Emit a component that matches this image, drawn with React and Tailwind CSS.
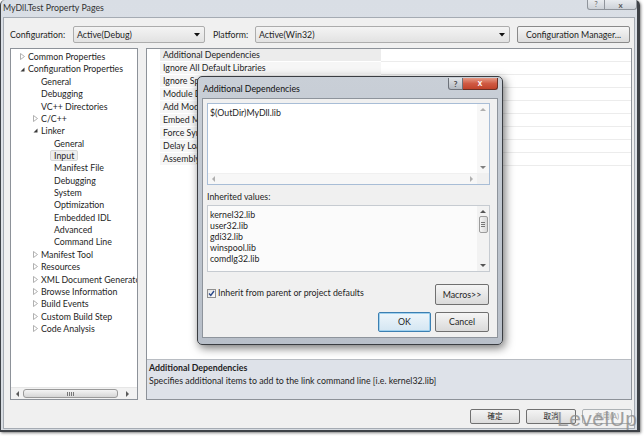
import React from "react";

const TriClosed = () => (
  <svg width="5" height="7" viewBox="0 0 5 7">
    <path d="M0.5 0.5 L4.5 3.5 L0.5 6.5 Z" fill="none" stroke="#a8a8a8" strokeWidth="0.9" />
  </svg>
);
const TriOpen = () => (
  <svg width="5" height="5" viewBox="0 0 5 5">
    <path d="M4.5 0.5 L4.5 4.5 L0.5 4.5 Z" fill="#3a3a3a" />
  </svg>
);
const Arrow = ({ dir, color = "#6e6e6e" }) => {
  const d = {
    up: "M0 4 L3 1 L6 4 Z",
    down: "M0 1 L3 4 L6 1 Z",
    left: "M4 0 L1 3 L4 6 Z",
    right: "M1 0 L4 3 L1 6 Z",
  }[dir];
  const vert = dir === "up" || dir === "down";
  return (
    <svg width={vert ? 6 : 5} height={vert ? 5 : 6} viewBox={vert ? "0 0 6 5" : "0 0 5 6"}>
      <path d={d} fill={color} />
    </svg>
  );
};
const ComboArrow = () => (
  <svg width="6" height="4" viewBox="0 0 6 4">
    <path d="M0 0 L6 0 L3 3.5 Z" fill="#111" />
  </svg>
);

const tree = [
  ["Common Properties", 0, "c"],
  ["Configuration Properties", 0, "o"],
  ["General", 1, null],
  ["Debugging", 1, null],
  ["VC++ Directories", 1, null],
  ["C/C++", 1, "c"],
  ["Linker", 1, "o"],
  ["General", 2, null],
  ["Input", 2, null, true],
  ["Manifest File", 2, null],
  ["Debugging", 2, null],
  ["System", 2, null],
  ["Optimization", 2, null],
  ["Embedded IDL", 2, null],
  ["Advanced", 2, null],
  ["Command Line", 2, null],
  ["Manifest Tool", 1, "c"],
  ["Resources", 1, "c"],
  ["XML Document Generator", 1, "c"],
  ["Browse Information", 1, "c"],
  ["Build Events", 1, "c"],
  ["Custom Build Step", 1, "c"],
  ["Code Analysis", 1, "c"],
];
const levelPad = ["pl-[9px]", "pl-[22px]", "pl-[35px]"];

const gridRows = [
  "Additional Dependencies",
  "Ignore All Default Libraries",
  "Ignore Specific Default Libraries",
  "Module Definition File",
  "Add Module to Assembly",
  "Embed Managed Resource File",
  "Force Symbol References",
  "Delay Loaded Dlls",
  "Assembly Link Resource",
];

const inherited = ["kernel32.lib", "user32.lib", "gdi32.lib", "winspool.lib", "comdlg32.lib"];

export default function App() {
  return (
    <div className="relative w-[644px] h-[436px] overflow-hidden bg-white font-['Lato','Noto_Sans_CJK_TC',sans-serif] text-[8.8px] text-[#1e1e1e]">
      {/* main window */}
      <div className="w-[640px] h-[432px] flex flex-col rounded-t-[5px] border-l border-r-[3px] border-b-[2px] border-[#3e4247] bg-gradient-to-b from-[#d9dee5] via-[#dfe3e8] to-[#d7dce2] shadow-[1px_1px_3px_rgba(0,0,0,0.5)]">
        {/* title bar */}
        <div className="h-[17px] flex justify-between items-start">
          <div className="pl-[2px] pt-[2px] text-[8.8px] leading-[12px] text-[#333]">MyDll.Test Property Pages</div>
          <div className="flex">
            <div className="w-[18px] h-[10px] border border-[#8f949b] border-t-0 rounded-bl-[3px] bg-gradient-to-b from-[#e8ebef] to-[#cdd2d8] flex items-center justify-center text-[7px] leading-none text-[#666]">?</div>
            <div className="w-[32px] h-[10px] border border-l-0 border-t-0 border-[#8f949b] rounded-br-[3px] bg-gradient-to-b from-[#e8ebef] to-[#cdd2d8] flex items-center justify-center text-[8px] leading-none text-[#555] font-bold">x</div>
          </div>
        </div>
        {/* client */}
        <div className="flex-1 mx-[2px] mb-[1px] bg-[#f0f0f0] border border-[#a5abb3] flex flex-col">
          {/* config row */}
          <div className="mt-[8px] h-[17px] flex items-center pl-[6px]">
            <span className="w-[63px]">Configuration:</span>
            <div className="w-[132px] h-[17px] border border-[#acacac] rounded-[2px] bg-gradient-to-b from-[#f4f4f4] to-[#e2e2e2] flex items-center justify-between pl-[3px] pr-[4px]">
              <span>Active(Debug)</span>
              <ComboArrow />
            </div>
            <span className="ml-[8px] w-[42px]">Platform:</span>
            <div className="w-[255px] h-[17px] border border-[#acacac] rounded-[2px] bg-gradient-to-b from-[#f4f4f4] to-[#e2e2e2] flex items-center justify-between pl-[3px] pr-[4px]">
              <span>Active(Win32)</span>
              <ComboArrow />
            </div>
            <div className="ml-[7px] w-[113px] h-[17px] border border-[#8a8a8a] rounded-[2px] bg-gradient-to-b from-[#f6f6f6] to-[#dcdcdc] flex items-center justify-center">
              Configuration Manager...
            </div>
          </div>
          {/* panels */}
          <div className="mt-[5px] h-[352px] flex pl-[6px]">
            {/* tree */}
            <div className="w-[128px] h-full border border-[#8d9299] bg-white flex flex-col">
              <div className="flex-1 pt-[1.5px] overflow-hidden">
                {tree.map(([label, lvl, tri, sel], i) => (
                  <div key={i} className={`h-[12.36px] flex items-center whitespace-nowrap ${levelPad[lvl]}`}>
                    <span className="w-[8px] shrink-0 flex items-center">
                      {tri === "c" ? <TriClosed /> : tri === "o" ? <TriOpen /> : null}
                    </span>
                    {sel ? (
                      <span className="-ml-[4px] px-[3px] h-[11px] flex items-center bg-[#eeeeee] border border-[#d8d8d8] rounded-[2px]">{label}</span>
                    ) : (
                      <span>{label}</span>
                    )}
                  </div>
                ))}
              </div>
              <div className="h-[12px] flex items-center bg-[#f2f2f2] border-t border-[#e6e6e6]">
                <span className="w-[12px] flex justify-center"><Arrow dir="left" color="#5a5a5a" /></span>
                <div className="w-[95px] h-[9px] rounded-[3px] border border-[#9a9a9a] bg-gradient-to-b from-[#f4f4f4] to-[#d6d6d6] flex items-center justify-center gap-[1px]">
                  <span className="w-[1px] h-[4px] bg-[#777]" />
                  <span className="w-[1px] h-[4px] bg-[#777]" />
                  <span className="w-[1px] h-[4px] bg-[#777]" />
                  <span className="w-[1px] h-[4px] bg-[#777]" />
                </div>
                <span className="flex-1 flex justify-center"><Arrow dir="right" color="#5a5a5a" /></span>
              </div>
            </div>
            {/* property grid */}
            <div className="ml-[8px] w-[486px] h-full border border-[#8d9299] bg-white flex flex-col">
              <div className="h-[310px]">
                {gridRows.map((r, i) => (
                  <div key={i} className="h-[13px] flex">
                    <div className="w-[13px]" />
                    <div className={`w-[221px] flex items-center pl-[3px] border-b border-white whitespace-nowrap overflow-hidden ${i === 0 ? "bg-[#ececec]" : "bg-[#f6f6f6]"}`}>{r}</div>
                    <div className="flex-1 border-b border-[#ececec]" />
                  </div>
                ))}
              </div>
              <div className="flex-1 border-t border-[#b8bcc2] bg-[#dee2e9] pl-[2px] pt-[1px]">
                <div className="font-bold leading-[13px]">Additional Dependencies</div>
                <div className="leading-[13px]">Specifies additional items to add to the link command line [i.e. kernel32.lib]</div>
              </div>
            </div>
          </div>
          {/* bottom buttons */}
          <div className="mt-[9px] h-[15px] flex justify-end gap-[6px] pr-[2px]">
            <div className="w-[50px] h-[15px] border border-[#707070] rounded-[2px] bg-gradient-to-b from-[#f4f4f4] to-[#dcdcdc] flex items-center justify-center text-[7.5px]">確定</div>
            <div className="w-[50px] h-[15px] border border-[#707070] rounded-[2px] bg-gradient-to-b from-[#f4f4f4] to-[#dcdcdc] flex items-center justify-center text-[7.5px]">取消</div>
            <div className="w-[50px] h-[15px] border border-[#adb2b5] rounded-[2px] bg-[#f4f4f4] flex items-center justify-center text-[7.5px] text-[#a0a0a0]">套用(A)</div>
          </div>
        </div>
      </div>

      {/* modal dialog */}
      <div className="absolute left-[197px] top-[76px] w-[306px] h-[269px] rounded-[5px] border border-[#3a3d42] bg-gradient-to-b from-[#c9cfd7] via-[#bfc6cf] to-[#b8bfc9] shadow-[2px_3px_10px_rgba(0,0,0,0.55)] flex flex-col">
        <div className="h-[21px] flex justify-between items-start">
          <div className="pl-[5px] pt-[6px] leading-[12px] text-[8.8px] text-[#111]">Additional Dependencies</div>
          <div className="flex mr-[4px] mt-[1px]">
            <div className="w-[15px] h-[12px] border border-[#6d727a] border-t-0 rounded-bl-[3px] bg-gradient-to-b from-[#e1e4e8] to-[#b3b9c1] flex items-center justify-center text-[8px] leading-none text-[#444] font-bold">?</div>
            <div className="w-[35px] h-[12px] border border-l-0 border-t-0 border-[#6b3025] rounded-br-[3px] bg-gradient-to-b from-[#e49a86] via-[#cf5a43] to-[#c0422a] flex items-center justify-center text-[8.5px] leading-none text-white font-bold">x</div>
          </div>
        </div>
        <div className="mx-[4px] h-[240px] bg-[#f0f0f0] border border-[#8e949c] p-[4px] flex flex-col">
          {/* text box */}
          <div className="w-[283px] h-[82px] border border-[#a8bdd6] bg-white flex flex-col">
            <div className="flex-1 flex">
              <div className="flex-1 pl-[2px] pt-[3px] leading-[12px]">$(OutDir)MyDll.lib</div>
              <div className="w-[12px] bg-[#f7f7f7] flex flex-col items-center justify-between py-[3px]">
                <Arrow dir="up" color="#b0b0b0" />
                <Arrow dir="down" color="#808080" />
              </div>
            </div>
            <div className="h-[11px] flex border-t border-[#f0f0f0]">
              <div className="flex-1 bg-[#f7f7f7] flex items-center justify-between px-[3px]">
                <Arrow dir="left" color="#b0b0b0" />
                <Arrow dir="right" color="#b0b0b0" />
              </div>
              <div className="w-[12px] bg-[#f0f0f0]" />
            </div>
          </div>
          <div className="pt-[6px] h-[20px] leading-[12px]">Inherited values:</div>
          {/* list */}
          <div className="w-[283px] h-[67px] border border-[#c6cbd1] bg-[#fbfbfb] flex">
            <div className="flex-1 pl-[2px] pt-[3px]">
              {inherited.map((t) => (
                <div key={t} className="h-[11px] leading-[11px]">{t}</div>
              ))}
            </div>
            <div className="w-[12px] bg-[#f2f2f2] flex flex-col items-center py-[3px]">
              <Arrow dir="up" color="#555" />
              <div className="mt-[2px] w-[9px] h-[17px] rounded-[2px] border border-[#9c9c9c] bg-gradient-to-r from-[#f4f4f4] to-[#d9d9d9] flex flex-col items-center justify-center gap-[1px]">
                <span className="w-[4px] h-[1px] bg-[#777]" />
                <span className="w-[4px] h-[1px] bg-[#777]" />
                <span className="w-[4px] h-[1px] bg-[#777]" />
              </div>
              <div className="flex-1" />
              <Arrow dir="down" color="#555" />
            </div>
          </div>
          {/* checkbox + macros */}
          <div className="mt-[12px] flex justify-between items-start">
            <div className="mt-[3px] flex items-center gap-[2px]">
              <div className="w-[9px] h-[9px] border border-[#8f8f8f] bg-gradient-to-br from-[#e4e4e4] to-[#fbfbfb] flex items-center justify-center">
                <svg width="7" height="7" viewBox="0 0 7 7">
                  <path d="M1 3.5 L2.8 5.5 L6 1" fill="none" stroke="#2c4a8a" strokeWidth="1.4" />
                </svg>
              </div>
              <span className="leading-[12px]">Inherit from parent or project defaults</span>
            </div>
            <div className="mr-[4px] w-[54px] h-[21px] border border-[#707070] rounded-[2px] bg-gradient-to-b from-[#f5f5f5] to-[#dadada] flex items-center justify-center">Macros&gt;&gt;</div>
          </div>
          <div className="mt-[7px] mr-[4px] flex justify-end gap-[4px]">
            <div className="w-[53px] h-[20px] border border-[#3c7fb1] rounded-[2px] bg-gradient-to-b from-[#eef6fb] to-[#d4e6f2] shadow-[inset_0_0_0_1px_#9fd1ef] flex items-center justify-center">OK</div>
            <div className="w-[54px] h-[20px] border border-[#707070] rounded-[2px] bg-gradient-to-b from-[#f5f5f5] to-[#dadada] flex items-center justify-center">Cancel</div>
          </div>
        </div>
      </div>

      {/* watermark */}
      <div className="absolute left-[557px] top-[407px] text-[21px] leading-[24px] font-['Liberation_Sans',sans-serif] text-[#8c8c8c] opacity-80 tracking-[0.5px]">LevelUp</div>
    </div>
  );
}
